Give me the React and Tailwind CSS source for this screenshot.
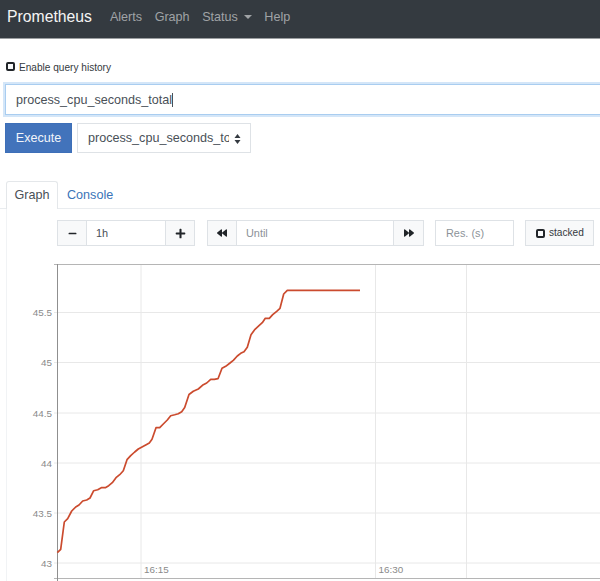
import { FaMinus, FaPlus, FaBackward, FaForward } from 'react-icons/fa'

const LINE = '57.3,552.7 60.7,549.3 64.3,522 67.7,518.7 71.7,511 75.7,507 79,505 82.7,501 86.7,500 90,498 93.7,490.7 97.7,489.7 101.3,487.7 105.3,487.7 108.7,485.7 112.3,482.7 116,477.7 119.7,474.7 123.3,470.7 127,459.7 130.7,455.7 134.7,452 138.3,449 142,447 145.7,445 149.3,443 152,439.3 156,427.7 159.7,427.7 163.3,424 167.3,420 170.7,415.7 174.7,414.7 178.3,413.7 181.7,411.7 184.7,407.5 189,394.5 193.3,391.3 198.3,389 203.3,384.7 206.7,383 210.7,379.3 214.3,379.3 218,378.7 222,368.3 225.7,366.3 230,363 233.3,360.3 237.3,356 240.7,353.3 244,351.7 247.3,347.3 251,334.7 255,329.3 259,325.7 262.3,322.7 265.3,318.3 269.3,318.3 272.7,314.7 276.7,311.3 280,308.3 283.7,294 287.3,290.3 360,290.3'

const yTicks = [
  ['45.5', 312.5],
  ['45', 362.5],
  ['44.5', 413],
  ['44', 463],
  ['43.5', 513],
  ['43', 563],
]

const xTicks = [
  ['16:15', 141],
  ['16:30', 375.5],
  ['', 466.5],
]

function Chart() {
  // viewBox uses page coordinates, chart block starts at y=262
  return (
    <svg className="block w-[600px] h-[319px] -ml-[7px]" viewBox="0 262 600 319">
      {yTicks.map(([label, y]) => (
        <g key={y}>
          <line x1="54" x2="600" y1={y} y2={y} stroke="#e8e8e8" strokeWidth="1" />
          <text x="52" y={y + 3.5} textAnchor="end" fontSize="9.9" fill="#8a8a8a" fontFamily="Liberation Sans, sans-serif">{label}</text>
        </g>
      ))}
      {xTicks.map(([label, x]) => (
        <g key={x}>
          <line x1={x} x2={x} y1="264" y2="578" stroke="#e8e8e8" strokeWidth="1" />
          {label && <text x={x + 3} y="573" fontSize="9.9" fill="#8a8a8a" fontFamily="Liberation Sans, sans-serif">{label}</text>}
        </g>
      ))}
      <line x1="54" x2="600" y1="264.5" y2="264.5" stroke="#b5b5b5" strokeWidth="1" />
      <line x1="54" x2="600" y1="578.5" y2="578.5" stroke="#b5b5b5" strokeWidth="1" />
      <line x1="57.5" x2="57.5" y1="264" y2="581" stroke="#8f8f8f" strokeWidth="1" />
      <polyline points={LINE} fill="none" stroke="#cb4b2e" strokeWidth="1.7" strokeLinejoin="round" />
    </svg>
  )
}

function AddonBtn({ children, className = '' }) {
  return (
    <button className={`flex items-center justify-center bg-[#f8f9fa] border border-[#dee2e6] text-[#212529] h-[26px] ${className}`}>
      {children}
    </button>
  )
}

export default function App() {
  return (
    <div className="w-[600px] h-[581px] overflow-hidden bg-white [font-family:Liberation_Sans,sans-serif] text-[#495057]">
      {/* NAVBAR */}
      <nav className="h-[39px] bg-[#343a40] border-b border-[#9a9da0] flex items-center pl-[7px] pb-[4px]">
        <span className="text-[#f4f4f4] text-[15.75px] mr-[18px]">Prometheus</span>
        <div className="flex items-center gap-[12.5px] text-[12.6px] text-[#a0a3a6]">
          <span>Alerts</span>
          <span>Graph</span>
          <span className="flex items-center gap-[6px]">
            Status
            <span className="w-0 h-0 border-x-[4px] border-x-transparent border-t-[4px] border-t-[#a0a3a6]" />
          </span>
          <span>Help</span>
        </div>
      </nav>

      {/* QUERY */}
      <div className="h-[45px] pl-[6px] pt-[22px] flex items-start gap-[4px] text-[10.1px] text-[#343a40]">
        <span className="w-[5px] h-[5px] mt-[1px] border-[2px] border-[#212529] rounded-[2px] bg-[#f8f9fa] shrink-0 box-content" />
        <span className="leading-[14px]">Enable query history</span>
      </div>

      <div className="ml-[5px] w-[620px] h-[31px] pt-[1px] border border-[#a9cdf0] ring-2 ring-[#d4e6f8] bg-white flex items-center pl-[10px] text-[12.6px] text-[#495057]">
        <span>process_cpu_seconds_total</span>
        <span className="w-px h-[14px] bg-[#495057]" />
      </div>

      <div className="flex gap-[5px] ml-[5px] mt-[8px]">
        <button className="w-[67px] h-[30px] pt-[1px] bg-[#4273bb] border border-[#3d6fb8] text-[#f2f5fa] text-[12.6px]">Execute</button>
        <div className="w-[174px] h-[30px] pt-[1px] border border-[#dee2e6] flex items-center pl-[10px] text-[12.6px] text-[#495057] relative">
          <span className="w-[141px] overflow-hidden whitespace-nowrap">process_cpu_seconds_total</span>
          <svg className="absolute right-[9px] top-[9px]" width="7" height="12" viewBox="0 0 7 12">
            <path d="M3.5 1 L6.5 5 H0.5 Z M3.5 11 L0.5 7 H6.5 Z" fill="#343a40" />
          </svg>
        </div>
      </div>

      {/* TABS */}
      <div className="flex mt-[28px] h-[28px] text-[12.6px]">
        <div className="w-[6px] border-b border-[#e9ecef]" />
        <div className="w-[52px] h-[28px] border border-b-0 border-[#e4e7ea] rounded-t-[3px] flex items-center justify-center text-[#495057]">Graph</div>
        <div className="flex-1 border-b border-[#e9ecef] pl-[9px] pt-[1px] flex items-center text-[#3a74b8]">Console</div>
      </div>

      {/* TAB PANEL */}
      <div className="ml-[6px] border-l border-[#f1f3f5]">
        <div className="flex pt-[11px] ml-[50px] h-[38px] text-[10.9px] text-[#6c757d]">
          <AddonBtn className="w-[30px]"><FaMinus size={9} /></AddonBtn>
          <div className="w-[78px] h-[26px] border-y border-[#dee2e6] flex items-center pl-[9px] text-[#495057]">1h</div>
          <AddonBtn className="w-[30px]"><FaPlus size={11} /></AddonBtn>

          <AddonBtn className="w-[30px] ml-[12px]"><FaBackward size={10} /></AddonBtn>
          <div className="w-[156px] h-[26px] border-y border-[#dee2e6] flex items-center pl-[9px] text-[#8c9298]">Until</div>
          <AddonBtn className="w-[31px]"><FaForward size={10} /></AddonBtn>

          <div className="w-[79px] h-[26px] ml-[11px] border border-[#dee2e6] flex items-center pl-[10px] text-[#8c9298]">Res. (s)</div>

          <div className="w-[69px] h-[26px] ml-[11px] border border-[#dee2e6] bg-[#f8f9fa] flex items-center pl-[10px] gap-[4px] text-[10.1px] text-[#343a40]">
            <span className="w-[5px] h-[5px] border-[2px] border-[#212529] rounded-[2px] box-content" />
            stacked
          </div>
        </div>

        <div className="mt-[15px]">
          <Chart />
        </div>
      </div>
    </div>
  )
}
